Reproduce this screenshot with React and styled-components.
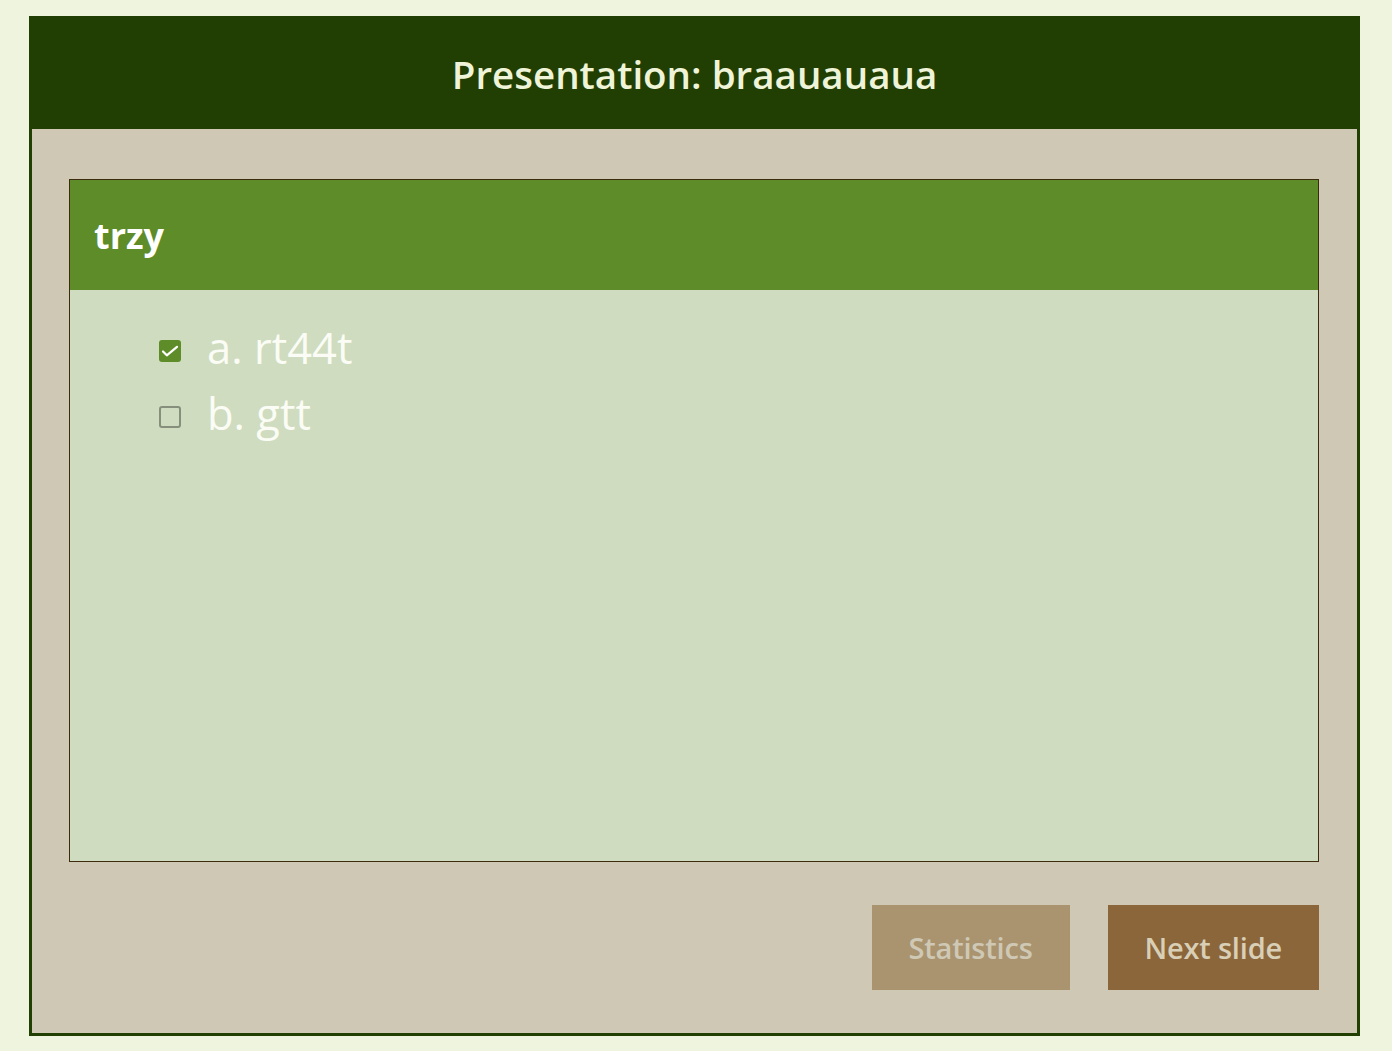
import React, { useState } from 'react';
import styled, { createGlobalStyle } from 'styled-components';

const GlobalStyle = createGlobalStyle`
  html, body {
    margin: 0;
    padding: 0;
    background-color: #eff4de;
    font-family: "Open Sans", "DejaVu Sans", sans-serif;
  }
`;

const Frame = styled.div`
  width: 1331px;
  box-sizing: border-box;
  margin: 16px 0 0 29px;
  border: 3px solid #223f03;
  background-color: #cfc8b5;
`;

const Header = styled.header`
  height: 110px;
  background-color: #223f03;
  display: flex;
  align-items: center;
  justify-content: center;
`;

const Title = styled.h1`
  margin: 0;
  font-size: 38.5px;
  font-weight: 600;
  color: #eff4d9;
`;

const Content = styled.main`
  padding: 50px 38px 43px 37px;
  display: flex;
  flex-direction: column;
  gap: 43px;
`;

const Card = styled.section`
  border: 1px solid #3d2b0e;
  background-color: #cfdcbf;
`;

const CardHeader = styled.div`
  height: 110px;
  background-color: #5e8c28;
  display: flex;
  align-items: center;
  padding-left: 24px;
`;

const CardTitle = styled.h2`
  margin: 0;
  font-size: 36px;
  font-weight: 700;
  color: #ffffff;
`;

const OptionList = styled.ul`
  list-style: none;
  margin: 0;
  padding: 25px 0 0 89px;
  height: 571px;
  box-sizing: border-box;
`;

const OptionRow = styled.li`
  display: flex;
  align-items: center;
  gap: 26px;
  font-size: 43.5px;
  line-height: 66px;
  color: #fafcf5;
  cursor: pointer;
`;

const Box = styled.span`
  width: 22px;
  height: 22px;
  box-sizing: border-box;
  border-radius: 3px;
  display: flex;
  align-items: center;
  justify-content: center;
  margin-top: 6px;
  background-color: ${p => (p.checked ? '#5e8c28' : 'transparent')};
  border: ${p => (p.checked ? 'none' : '2px solid #858f7c')};
`;

const Actions = styled.div`
  display: flex;
  justify-content: flex-end;
  gap: 38px;
`;

const Button = styled.button`
  height: 85px;
  padding: 0 37px;
  border: none;
  font-family: inherit;
  font-size: 29px;
  letter-spacing: -0.2px;
  font-weight: 600;
  cursor: pointer;
  background-color: ${p => (p.muted ? '#a9946f' : '#8b663a')};
  color: ${p => (p.muted ? '#cfc8b5' : '#d8cfb6')};
`;

const options = [
  { id: 'a', label: 'a. rt44t' },
  { id: 'b', label: 'b. gtt' },
];

export default function App() {
  const [selected, setSelected] = useState({ a: true, b: false });

  return (
    <>
      <GlobalStyle />
      <Frame>
        <Header>
          <Title>Presentation: braauauaua</Title>
        </Header>
        <Content>
          <Card>
            <CardHeader>
              <CardTitle>trzy</CardTitle>
            </CardHeader>
            <OptionList>
              {options.map(o => (
                <OptionRow
                  key={o.id}
                  onClick={() => setSelected(s => ({ ...s, [o.id]: !s[o.id] }))}
                >
                  <Box checked={selected[o.id]}>
                    {selected[o.id] && (
                      <svg width="22" height="22" viewBox="0 0 22 22">
                        <path d="M4 11.5l3.8 3.8L18 6.8" fill="none" stroke="#fff" strokeWidth="2.2" strokeLinecap="round" strokeLinejoin="round" />
                      </svg>
                    )}
                  </Box>
                  {o.label}
                </OptionRow>
              ))}
            </OptionList>
          </Card>
          <Actions>
            <Button muted>Statistics</Button>
            <Button>Next slide</Button>
          </Actions>
        </Content>
      </Frame>
    </>
  );
}
